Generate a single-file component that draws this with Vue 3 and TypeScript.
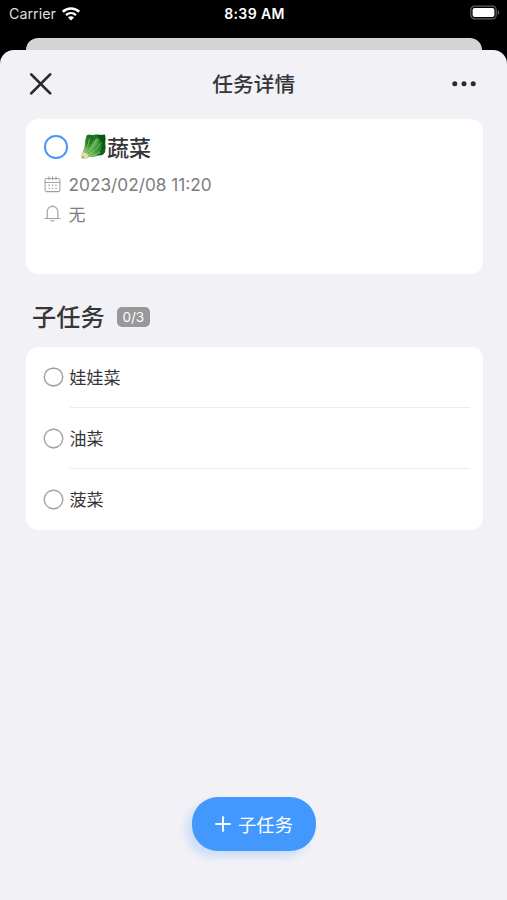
<script setup lang="ts">
interface SubTask {
  id: number
  title: string
  done: boolean
}

const subTasks: SubTask[] = [
  { id: 1, title: '娃娃菜', done: false },
  { id: 2, title: '油菜', done: false },
  { id: 3, title: '菠菜', done: false },
]
const doneCount = subTasks.filter((t) => t.done).length
</script>

<template>
  <div class="screen">
    <header class="status">
      <div class="carrier">
        <span class="carrier-name">Carrier</span>
        <svg width="20" height="16" viewBox="0 0 20 16" fill="none" stroke="#fff">
          <path d="M1.8 5.8C6.5 1.4 13.5 1.4 18.2 5.8" stroke-width="2.6" />
          <path d="M5 9.1c2.9-2.7 7.1-2.7 10 0" stroke-width="2.4" />
          <path d="M7 11.4c1.7-1.5 4.3-1.5 6 0L10 14.6z" fill="#fff" stroke="none" />
        </svg>
      </div>
      <span class="clock">8:39 AM</span>
      <svg class="battery" width="31" height="16" viewBox="0 0 31 16">
        <rect x=".8" y="1.1" width="25.4" height="12.8" rx="3.8" fill="none" stroke="#626262" stroke-width="1.2" />
        <rect x="2.6" y="2.9" width="21.8" height="9.2" rx="2" fill="#fff" />
        <path d="M27.7 5.2v4.6c2.1-.8 2.1-3.8 0-4.6z" fill="#626262" />
      </svg>
    </header>
    <div class="back-sheet"></div>
    <main class="sheet">
      <nav class="nav">
        <svg width="24" height="24" viewBox="0 0 24 24" fill="none" stroke="#29292d" stroke-width="2.7" stroke-linecap="round">
          <path d="M2.2 2.4l19 19M21.2 2.4l-19 19" />
        </svg>
        <h1 class="title">任务详情</h1>
        <svg width="24" height="8" viewBox="0 0 24 8" fill="#29292d">
          <circle cx="2.8" cy="3.8" r="2.5" />
          <circle cx="12" cy="3.8" r="2.5" />
          <circle cx="21.2" cy="3.8" r="2.5" />
        </svg>
      </nav>

      <section class="card detail">
        <div class="task">
          <span class="ring"></span>
          <svg class="greens" width="27" height="26" viewBox="0 0 27 26">
            <defs>
              <linearGradient id="leaf" x1=".9" y1=".1" x2=".1" y2="1">
                <stop offset="0" stop-color="#0b6413" />
                <stop offset=".5" stop-color="#3c9a3a" />
                <stop offset="1" stop-color="#b7d387" />
              </linearGradient>
            </defs>
            <path d="M6.500 1.500L8.500.500l4 .4 4-.5 4 .5 4.500-.3.600 4-.5 5 .6 4-.6 4.500-2.500 3-4.600.4-4 1.600-4.500-.2-3.700 1.800-3.800-.4L.800 22l2.200-4.500 1.500-4.500.5-6z" fill="url(#leaf)" />
            <path d="M17 .8l8 .3.200 12.500-.6 5-2.200 2.300-6 .5 4.600-5.400 1.500-7.500z" fill="#064b10" opacity=".7" />
            <path d="M7 1.800l5-.6 2.500 2-3 5.500L6 15z" fill="#136a1a" opacity=".65" />
            <path d="M18.500 4c1.500 5-3 11-12.500 17.500C9 16.500 11.500 10.500 14 7z" fill="#62b653" opacity=".75" />
            <path d="M3.300 21C6.500 16 8.500 11 9.500 5M3.800 21.800C9 17.500 14 12 16.500 5M4.200 22.500C11 20 17 15.500 20 9.500M4.500 23c6-.6 11-2 15.500-4.500" fill="none" stroke="#9ccf7c" stroke-width=".8" stroke-linecap="round" />
            <path d="M3.200 18.600L1 22.200l1.400 2.400 3.500.1 2.600-2-1.500-3.200z" fill="#dfe0b0" />
            <circle cx="3" cy="23.300" r="1.400" fill="#c9a978" />
          </svg>
          <span class="task-name">蔬菜</span>
        </div>
        <div class="meta">
          <svg width="17" height="17" viewBox="0 0 17 17" fill="none" stroke="#a2a2a2" stroke-width="1.05" stroke-linecap="round">
            <rect x="1.1" y="2.4" width="14.8" height="13.2" rx="1.7" />
            <path d="M1.1 6.4h14.8M5 .8v3M8.500 .8v3M12 .8v3" />
            <path d="M4.500 9.300h1.400M7.900 9.300h1.400M11.300 9.300h1.400M4.500 12.400h1.400M7.900 12.400h1.400M11.300 12.400h1.400" stroke-width="1.4" stroke-linecap="butt" />
          </svg>
          <span class="date">2023/02/08 11:20</span>
        </div>
        <div class="meta">
          <svg width="17" height="17" viewBox="0 0 17 17" fill="none" stroke="#a2a2a2" stroke-width="1.2" stroke-linecap="round">
            <path d="M3.200 13.300V6.600a5.300 5.300 0 0 1 10.600 0v6.700M1 13.500h15M8.500 .5v.8M6.900 15.200c.6 1.100 2.600 1.100 3.200 0" />
          </svg>
          <span class="remind">无</span>
        </div>
      </section>

      <div class="section-head">
        <h2 class="section-title">子任务</h2>
        <span class="badge">{{ doneCount }}/{{ subTasks.length }}</span>
      </div>

      <ul class="card list">
        <li v-for="item in subTasks" :key="item.id" class="row">
          <span class="check"></span>
          <span class="row-title">{{ item.title }}</span>
        </li>
      </ul>

      <button class="add" type="button">
        <svg width="16" height="16" viewBox="0 0 16 16" stroke="#fff" stroke-width="1.8" stroke-linecap="round">
          <path d="M8 1v14M1 8h14" />
        </svg>
        <span>子任务</span>
      </button>
    </main>
  </div>
</template>

<style>
body {
  margin: 0;
  background: #000;
}
</style>

<style scoped>
.screen {
  width: 507px;
  height: 900px;
  display: flex;
  flex-direction: column;
  overflow: hidden;
  background: #000;
  color: #363638;
  font-family: Inter, "Noto Sans CJK SC", sans-serif;
}
.status {
  display: grid;
  grid-template-columns: 1fr auto 1fr;
  align-items: center;
  height: 27px;
  margin-bottom: 10.5px;
  padding: 0 6px 0 9px;
  color: #fff;
  font-size: 14px;
}
.carrier {
  display: flex;
  align-items: center;
  gap: 5px;
}
.carrier-name {
  color: #dedede;
  font-size: 14.3px;
}
.clock {
  margin-left: -1px;
  font-size: 14px;
  font-weight: 600;
  letter-spacing: 0.4px;
}
.battery {
  justify-self: end;
  margin-top: -0.5px;
}
.back-sheet {
  height: 12.5px;
  margin: 0 25px 0 25.5px;
  border-radius: 12px 12px 0 0;
  background: #d4d4d6;
}
.sheet {
  flex: 1;
  display: flex;
  flex-direction: column;
  border-radius: 14px 14px 0 0;
  background: #f1f1f6;
}
.nav {
  display: grid;
  grid-template-columns: 24px 1fr 24px;
  align-items: center;
  height: 68.5px;
  padding: 0 31px 0 28.5px;
}
.title {
  margin: 0;
  padding: 2px 0 0 3px;
  text-align: center;
  font-size: 20.7px;
  line-height: 30px;
  font-weight: 500;
}
.card {
  margin: 0 24.5px 0 25.5px;
  border-radius: 12px;
  background: #fff;
}
.detail {
  box-sizing: border-box;
  height: 155px;
  padding: 12.5px 18.5px;
}
.task {
  display: flex;
  align-items: center;
  height: 32px;
  margin-bottom: 6.5px;
}
.ring {
  box-sizing: border-box;
  width: 23.5px;
  height: 23.5px;
  margin-right: 12.5px;
  border: 2px solid #4596fa;
  border-radius: 50%;
}
.greens {
  margin-top: -0.5px;
}
.task-name {
  padding-top: 1px;
  font-size: 22px;
  line-height: 32px;
  font-weight: 500;
}
.meta {
  display: flex;
  align-items: center;
  gap: 7.5px;
  height: 29.5px;
  color: #7d7d7f;
}
.date {
  padding-top: 1px;
  font-size: 17.25px;
}
.remind {
  font-size: 17px;
}
.section-head {
  box-sizing: border-box;
  display: flex;
  align-items: center;
  gap: 12.5px;
  height: 73px;
  padding: 14.5px 32px 0;
}
.section-title {
  margin: 0;
  padding-top: 2px;
  font-size: 24.2px;
  line-height: 36px;
  font-weight: 500;
}
.badge {
  width: 32.5px;
  height: 20px;
  border-radius: 5px;
  background: #98989a;
  color: #fff;
  text-align: center;
  font-size: 13.6px;
  line-height: 20px;
}
.list {
  padding: 0;
  list-style: none;
}
.row {
  position: relative;
  display: flex;
  align-items: center;
  gap: 7px;
  height: 61.2px;
  padding-left: 18.5px;
}
.row:not(:last-child)::after {
  content: "";
  position: absolute;
  right: 13px;
  bottom: 0;
  left: 44px;
  height: 1px;
  background: #ececee;
}
.check {
  box-sizing: border-box;
  width: 18.5px;
  height: 18.5px;
  border: 1.8px solid #929294;
  border-radius: 50%;
  box-shadow: 0 0 0 0.4px #929294;
}
.row-title {
  padding-bottom: 1px;
  font-size: 17px;
}
.add {
  display: flex;
  align-items: center;
  justify-content: center;
  gap: 7px;
  width: 124px;
  height: 54px;
  margin: auto 0 49px 192px;
  padding: 0;
  border: 0;
  border-radius: 26px;
  background: #4298fd;
  box-shadow: -6px 6px 7px rgba(66, 152, 253, 0.2);
  color: #fff;
  font-family: inherit;
  font-size: 18.3px;
}
</style>
